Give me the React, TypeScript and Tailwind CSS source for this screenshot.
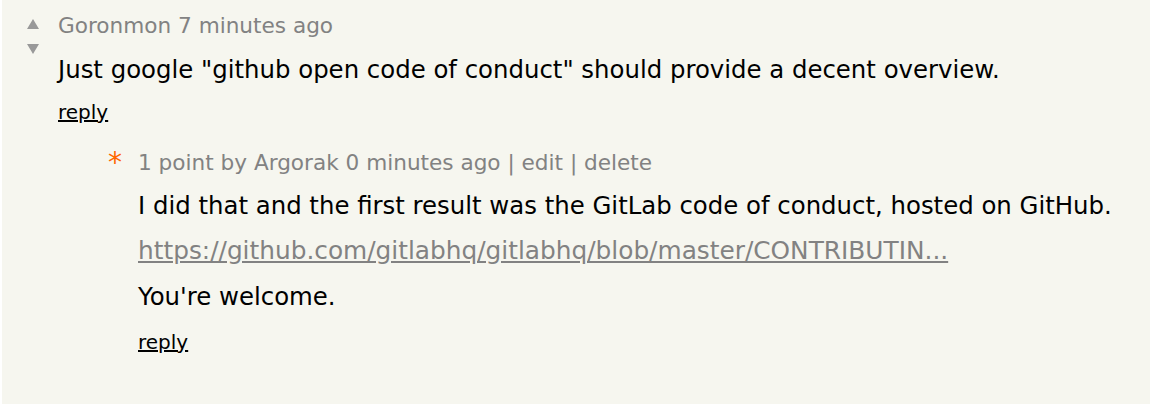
import React from 'react';

const font = { fontFamily: '"DejaVu Sans", Verdana, sans-serif' };

function Votes() {
  return (
    <div className="flex w-[31px] flex-col items-start pt-[8px]">
      <svg width="12" height="10" viewBox="0 0 12 10"><path d="M6 0L12 10H0z" fill="#999999" /></svg>
      <svg className="mt-[15px]" width="12" height="10" viewBox="0 0 12 10"><path d="M0 0H12L6 10z" fill="#999999" /></svg>
    </div>
  );
}

export default function App() {
  return (
    <div className="min-h-screen bg-white" style={font}>
      <div className="ml-[2px] h-[404px] bg-[#f6f6ef] pl-[25px] pt-[11px]">
        {/* parent comment */}
        <div className="flex">
          <Votes />
          <div className="text-[24.4px] text-black">
            <div className="text-[21.6px] text-[#828282] leading-[30px]">Goronmon 7 minutes ago</div>
            <div className="mt-[14px] leading-[30px]">Just google "github open code of conduct" should provide a decent overview.</div>
            <div className="mt-[14px] text-[20px] leading-[26px]">
              <a className="underline text-black">reply</a>
            </div>
          </div>
        </div>

        {/* child comment */}
        <div className="ml-[81px] mt-[23px] flex">
          <div className="w-[30px] text-[28px] leading-[30px] text-[#ff6600]">*</div>
          <div className="text-[24.4px] text-black">
            <div className="text-[21.6px] text-[#828282] leading-[30px]">1 point by Argorak 0 minutes ago | edit | delete</div>
            <div className="mt-[13px] leading-[30px]">I did that and the first result was the GitLab code of conduct, hosted on GitHub.</div>
            <div className="mt-[15px] text-[24.8px] leading-[30px]">
              <a className="underline text-[#828282]">https://github.com/gitlabhq/gitlabhq/blob/master/CONTRIBUTIN...</a>
            </div>
            <div className="mt-[16px] leading-[30px]">You're welcome.</div>
            <div className="mt-[17px] text-[20px] leading-[26px]">
              <a className="underline text-black">reply</a>
            </div>
          </div>
        </div>
      </div>
    </div>
  );
}
